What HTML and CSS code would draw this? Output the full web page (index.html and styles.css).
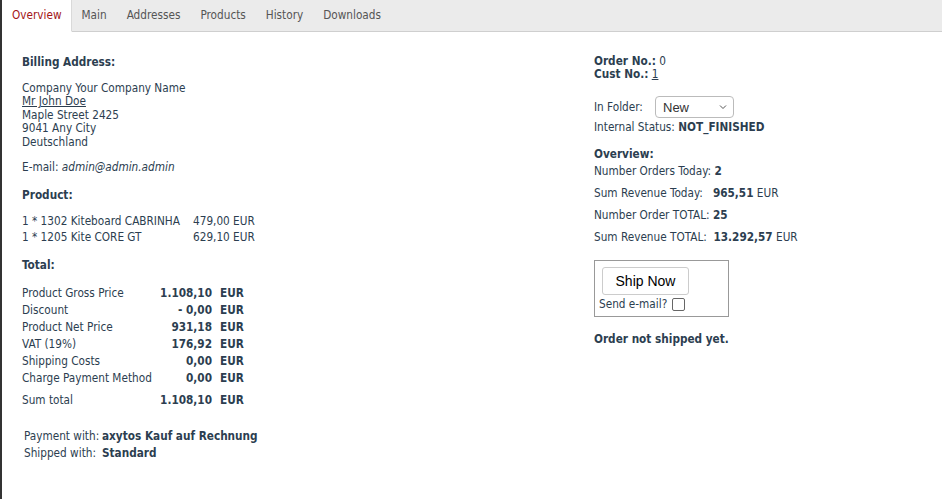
FILE: index.html
```html
<!DOCTYPE html>
<html>
<head>
<meta charset="utf-8">
<link rel="stylesheet" href="styles.css">
</head>
<body>
<div class="page">
  <div class="tabs">
    <div class="tab active">Overview</div>
    <div class="tab">Main</div>
    <div class="tab">Addresses</div>
    <div class="tab">Products</div>
    <div class="tab">History</div>
    <div class="tab">Downloads</div>
    <div class="tab-fill"></div>
  </div>
  <div class="content">
    <div class="left">
      <div class="h">Billing Address:</div>
      <div class="addr">
        <div>Company Your Company Name</div>
        <div><u>Mr John Doe</u></div>
        <div>Maple Street 2425</div>
        <div>9041 Any City</div>
        <div>Deutschland</div>
      </div>
      <div class="email">E-mail: <i>admin@admin.admin</i></div>
      <div class="h h-product">Product:</div>
      <div class="products">
        <div>1 * 1302 Kiteboard CABRINHA</div><div>479,00 EUR</div>
        <div>1 * 1205 Kite CORE GT</div><div>629,10 EUR</div>
      </div>
      <div class="h h-total">Total:</div>
      <div class="totals">
        <div>Product Gross Price</div><div class="num">1.108,10</div><div class="cur">EUR</div>
        <div>Discount</div><div class="num">- 0,00</div><div class="cur">EUR</div>
        <div>Product Net Price</div><div class="num">931,18</div><div class="cur">EUR</div>
        <div>VAT (19%)</div><div class="num">176,92</div><div class="cur">EUR</div>
        <div>Shipping Costs</div><div class="num">0,00</div><div class="cur">EUR</div>
        <div>Charge Payment Method</div><div class="num">0,00</div><div class="cur">EUR</div>
        <div class="sum">Sum total</div><div class="num sum">1.108,10</div><div class="cur sum">EUR</div>
      </div>
      <div class="pay">
        <div>Payment with:</div><div class="b">axytos Kauf auf Rechnung</div>
        <div>Shipped with:</div><div class="b">Standard</div>
      </div>
    </div>
    <div class="right">
      <div class="orderno"><b>Order No.:</b> 0</div>
      <div class="orderno"><b>Cust No.:</b> <u>1</u></div>
      <div class="folder">
        <span>In Folder:</span>
        <div class="select">New<svg width="8" height="6" viewBox="0 0 8 6"><path d="M1 1.5 L4 4.5 L7 1.5" fill="none" stroke="#555" stroke-width="1"/></svg></div>
      </div>
      <div class="status">Internal Status: <b>NOT_FINISHED</b></div>
      <div class="h ov">Overview:</div>
      <div class="stat s1">Number Orders Today: <b>2</b></div>
      <div class="stat">Sum Revenue Today:&nbsp;&nbsp; <b>965,51</b> EUR</div>
      <div class="stat">Number Order TOTAL: <b>25</b></div>
      <div class="stat">Sum Revenue TOTAL:&nbsp; <b>13.292,57</b> EUR</div>
      <div class="shipbox">
        <div class="btn">Ship Now</div>
        <div class="sendmail">Send e-mail? <span class="cb"></span></div>
      </div>
      <div class="h notship">Order not shipped yet.</div>
    </div>
  </div>
</div>
</body>
</html>
```
FILE: styles.css
```css
html, body { margin: 0; padding: 0; background: #fff; }
body {
  font-family: "DejaVu Sans Condensed", "DejaVu Sans", sans-serif;
  font-size: 11.7px;
  color: #2c3e50;
}
.page {
  border-left: 2px solid #333;
  height: 499px;
  box-sizing: border-box;
}
.tabs {
  display: flex;
  height: 32px;
}
.tab {
  padding: 0 10px;
  line-height: 31px;
  color: #555;
  background: #ebebeb;
  border-bottom: 1px solid #cfcfcf;
}
.tab.active {
  background: #fff;
  color: #a31518;
  border-bottom: 1px solid #fff;
  border-right: 1px solid #d9d9d9;
  padding-right: 9px;
}
.tab-fill { flex: 1; background: #ebebeb; border-bottom: 1px solid #cfcfcf; }
.content {
  display: flex;
  padding: 23px 0 0 20px;
}
.left { width: 572px; }
.right { flex: 1; }
.h { font-weight: bold; line-height: 14px; }
.addr { margin-top: 13px; line-height: 13.4px; }
.email { margin-top: 11px; line-height: 14px; }
.h-product { margin-top: 14px; }
.products {
  display: grid;
  grid-template-columns: 171px auto;
  justify-content: start;
  margin-top: 11px;
  line-height: 16px;
}
.h-total { margin-top: 13px; }
.totals {
  display: grid;
  grid-template-columns: 132px 58px auto;
  justify-content: start;
  margin-top: 13px;
  line-height: 17px;
}
.totals .num { text-align: right; font-weight: bold; }
.totals .cur { font-weight: bold; padding-left: 8px; }
.totals .sum { margin-top: 5px; }
.pay {
  display: grid;
  grid-template-columns: 78px auto;
  justify-content: start;
  margin: 19px 0 0 2px;
  line-height: 17px;
}
.b { font-weight: bold; }
.orderno { line-height: 13px; }
.folder { display: flex; align-items: center; gap: 10px; margin-top: 15px; }
.folder span { width: 51px; }
.select {
  width: 79px; height: 22px; box-sizing: border-box;
  border: 1px solid #bbb; border-radius: 4px;
  display: flex; align-items: center; justify-content: space-between;
  padding: 0 6px 0 7px; color: #333; font-family: "Liberation Sans", sans-serif; font-size: 13px;
}
.status { margin-top: 2px; line-height: 14px; }
.ov { margin-top: 13px; }
.stat { line-height: 22px; }
.s1 { line-height: 14px; margin: 3px 0 4px; }
.shipbox {
  margin-top: 12px;
  width: 135px; height: 57px; box-sizing: border-box;
  border: 1px solid #999;
  padding: 6px 0 0 4px;
}
.btn {
  width: 87px; height: 28px; box-sizing: border-box;
  margin-left: 3px;
  border: 1px solid #ccc; border-radius: 3px;
  display: flex; align-items: center; justify-content: center;
  font-family: "Liberation Sans", sans-serif; font-size: 14px; color: #000;
}
.sendmail { display: flex; align-items: center; gap: 5px; margin-top: 1px; line-height: 16px; }
.cb { width: 11px; height: 11px; border: 1px solid #666; border-radius: 2px; display: inline-block; }
.notship { margin-top: 15px; }
```
